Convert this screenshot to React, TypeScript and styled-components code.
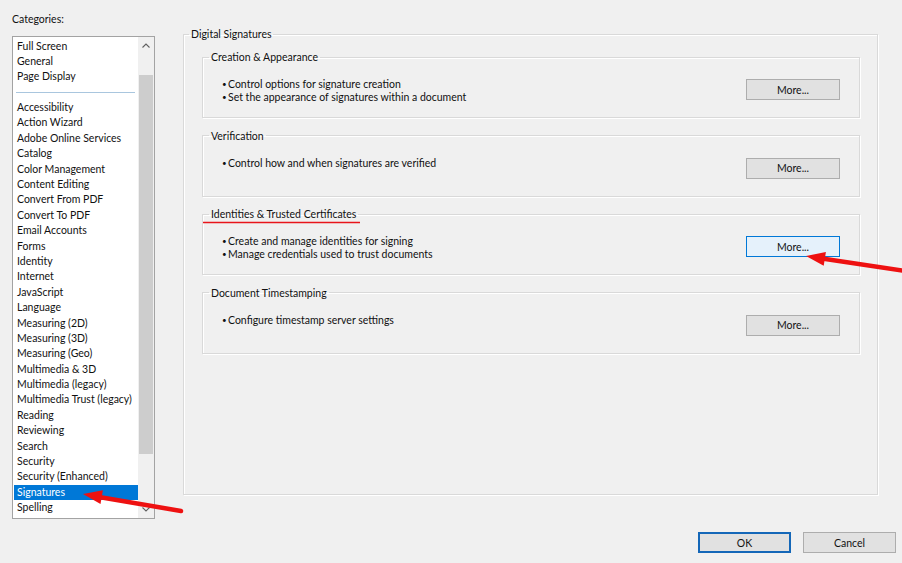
import React from "react";
import styled, { createGlobalStyle, css } from "styled-components";

const GlobalStyle = createGlobalStyle`
  html, body { margin: 0; padding: 0; background: #f0f0f0; }
  body {
    font-family: Lato, "Liberation Sans", Arial, sans-serif;
    font-size: 10.5px;
    color: #111;
  }
  * { box-sizing: border-box; }
`;

const Page = styled.div`
  position: relative;
  width: 902px;
  height: 563px;
  padding: 12px 6px 0 12px;
  display: flex;
  flex-direction: column;
  overflow: hidden;
`;

const Main = styled.div`
  display: flex;
  gap: 28px;
  align-items: flex-start;
`;

const LeftCol = styled.div`
  width: 143px;
  display: flex;
  flex-direction: column;
`;

const Label = styled.div`
  line-height: 14px;
  height: 14px;
  margin-bottom: 10px;
`;

const ListBox = styled.div`
  height: 483px;
  border: 1px solid #a3a3a3;
  background: #fff;
  display: flex;
`;

const Items = styled.ul`
  flex: 1;
  margin: 0;
  padding: 1.5px 0 0 1px;
  list-style: none;
  overflow: hidden;
`;

const Item = styled.li<{ $selected?: boolean }>`
  height: 15.4px;
  line-height: 15.4px;
  padding-left: 3px;
  white-space: nowrap;
  ${(p) =>
    p.$selected &&
    css`
      background: #0078d7;
      color: #fff;
    `}
`;

const SeparatorRow = styled.li`
  height: 15.4px;
  display: flex;
  align-items: center;
  padding: 0 3px 0 2px;
  &::after {
    content: "";
    flex: 1;
    height: 1px;
    background: #a9c6de;
  }
`;

const Scrollbar = styled.div`
  width: 16px;
  background: #f0f0f0;
  display: flex;
  flex-direction: column;
`;

const ScrollArrow = styled.div`
  height: 17px;
  display: flex;
  align-items: center;
  justify-content: center;
`;

const Track = styled.div`
  flex: 1;
  padding: 21px 1px 0 1px;
`;

const Thumb = styled.div`
  height: 379px;
  background: #cdcdcd;
`;

const GroupBox = styled.fieldset`
  margin: 0;
  padding: 0;
  border: 1px solid #d9d9d9;
  box-shadow: inset 1px 1px 0 #fff, 1px 1px 0 #fff;
  min-width: 0;
`;

const OuterGroup = styled(GroupBox)`
  width: 695px;
  height: 468px;
  margin-top: 15px;
`;

const SubGroup = styled(GroupBox)`
  height: 68px;
`;

const Legend = styled.legend<{ $offset: number }>`
  padding: 0 2px;
  margin-left: ${(p) => p.$offset}px;
  line-height: 14px;
  font-size: 10.5px;
`;

const OuterBody = styled.div`
  padding: 9px 17px 0 18px;
  display: flex;
  flex-direction: column;
  gap: 10.67px;
`;

const SubBody = styled.div`
  display: flex;
  justify-content: space-between;
  align-items: flex-start;
  padding: 0 19px;
`;

const Bullets = styled.ul`
  margin: 14px 0 0 0;
  padding: 0;
  list-style: none;
  line-height: 13px;
`;

const Bullet = styled.li`
  &::before {
    content: "\u2022";
    display: inline-block;
    width: 6px;
    font-size: 8px;
    vertical-align: 1px;
  }
`;

const Button = styled.button<{ $hover?: boolean; $default?: boolean }>`
  width: 94px;
  height: 21px;
  border: 1px solid #adadad;
  background: #e1e1e1;
  font-family: inherit;
  font-size: 10.5px;
  color: #111;
  padding: 0;
  ${(p) =>
    p.$hover &&
    css`
      background: #e5f1fb;
      border-color: #0078d7;
    `}
  ${(p) =>
    p.$default &&
    css`
      border: 2px solid #1467b8;
    `}
`;

const MoreButton = styled(Button)`
  margin-top: 15px;
`;

const DialogButton = styled(Button)`
  width: 93px;
`;

const Footer = styled.div`
  display: flex;
  justify-content: flex-end;
  gap: 12px;
  margin-top: 13px;
`;

const Overlay = styled.svg`
  position: absolute;
  left: 0;
  top: 0;
  pointer-events: none;
`;

const topItems = ["Full Screen", "General", "Page Display"];
const mainItems = [
  "Accessibility",
  "Action Wizard",
  "Adobe Online Services",
  "Catalog",
  "Color Management",
  "Content Editing",
  "Convert From PDF",
  "Convert To PDF",
  "Email Accounts",
  "Forms",
  "Identity",
  "Internet",
  "JavaScript",
  "Language",
  "Measuring (2D)",
  "Measuring (3D)",
  "Measuring (Geo)",
  "Multimedia & 3D",
  "Multimedia (legacy)",
  "Multimedia Trust (legacy)",
  "Reading",
  "Reviewing",
  "Search",
  "Security",
  "Security (Enhanced)",
  "Signatures",
  "Spelling",
];

const groups = [
  {
    title: "Creation & Appearance",
    bullets: [
      "Control options for signature creation",
      "Set the appearance of signatures within a document",
    ],
  },
  { title: "Verification", bullets: ["Control how and when signatures are verified"] },
  {
    title: "Identities & Trusted Certificates",
    bullets: [
      "Create and manage identities for signing",
      "Manage credentials used to trust documents",
    ],
    hover: true,
  },
  { title: "Document Timestamping", bullets: ["Configure timestamp server settings"] },
];

const Chevron = ({ up }: { up?: boolean }) => (
  <svg width="8" height="5" viewBox="0 0 8 5">
    <path
      d={up ? "M0.5 4.5 L4 1 L7.5 4.5" : "M0.5 0.5 L4 4 L7.5 0.5"}
      fill="none"
      stroke="#606060"
      strokeWidth="1.1"
    />
  </svg>
);

export default function App() {
  return (
    <>
      <GlobalStyle />
      <Page>
        <Main>
          <LeftCol>
            <Label>Categories:</Label>
            <ListBox>
              <Items>
                {topItems.map((t) => (
                  <Item key={t}>{t}</Item>
                ))}
                <SeparatorRow />
                {mainItems.map((t) => (
                  <Item key={t} $selected={t === "Signatures"}>
                    {t}
                  </Item>
                ))}
              </Items>
              <Scrollbar>
                <ScrollArrow>
                  <Chevron up />
                </ScrollArrow>
                <Track>
                  <Thumb />
                </Track>
                <ScrollArrow>
                  <Chevron />
                </ScrollArrow>
              </Scrollbar>
            </ListBox>
          </LeftCol>
          <OuterGroup>
            <Legend $offset={5}>Digital Signatures</Legend>
            <OuterBody>
              {groups.map((g) => (
                <SubGroup key={g.title}>
                  <Legend $offset={6}>{g.title}</Legend>
                  <SubBody>
                    <Bullets>
                      {g.bullets.map((b) => (
                        <Bullet key={b}>{b}</Bullet>
                      ))}
                    </Bullets>
                    <MoreButton $hover={g.hover}>More...</MoreButton>
                  </SubBody>
                </SubGroup>
              ))}
            </OuterBody>
          </OuterGroup>
        </Main>
        <Footer>
          <DialogButton $default>OK</DialogButton>
          <DialogButton>Cancel</DialogButton>
        </Footer>
        <Overlay width="902" height="563" viewBox="0 0 902 563">
          <line x1="203" y1="222.5" x2="360" y2="222.5" stroke="#e8141b" strokeWidth="1.3" />
          <line x1="181" y1="511" x2="99" y2="497" stroke="#ee1111" strokeWidth="4.5" strokeLinecap="round" />
          <polygon points="83,494 100.5,504.1 102.9,490.3" fill="#ee1111" />
          <line x1="906" y1="271" x2="822" y2="258.5" stroke="#ee1111" strokeWidth="4.5" />
          <polygon points="806,256 823.7,265.8 825.9,252" fill="#ee1111" />
        </Overlay>
      </Page>
    </>
  );
}
